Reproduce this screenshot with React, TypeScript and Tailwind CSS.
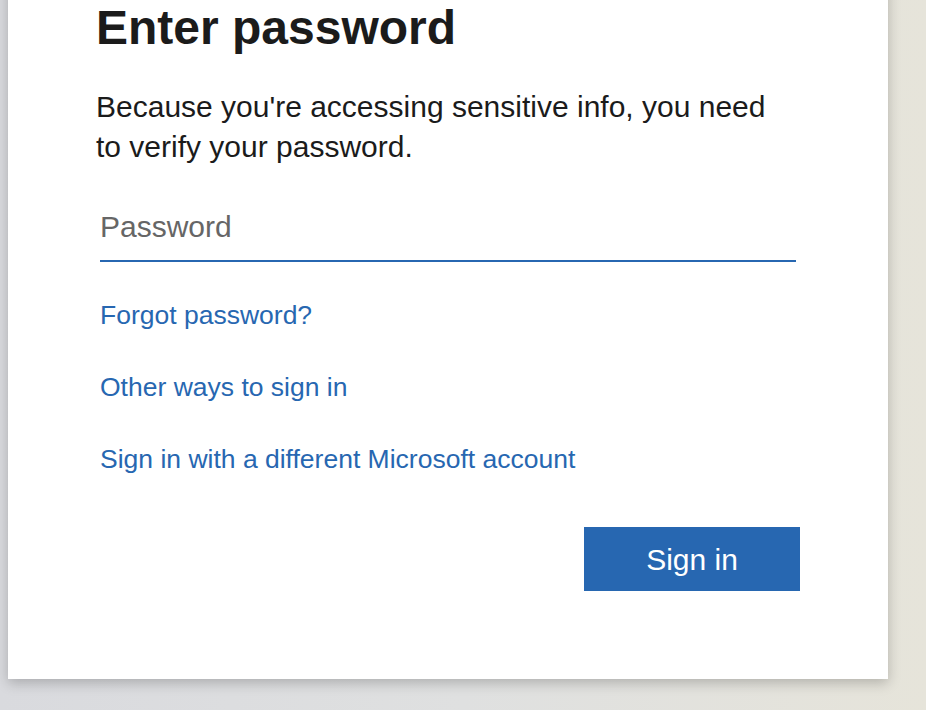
import { FC } from "react";

const font = { fontFamily: '"Liberation Sans", Arial, sans-serif' };

const links = [
  "Forgot password?",
  "Other ways to sign in",
  "Sign in with a different Microsoft account",
];

/**
 * Password prompt card, cropped at the top as in the capture.
 */
const App: FC = () => {
  return (
    <div
      style={font}
      className="h-[710px] w-[926px] overflow-hidden bg-[linear-gradient(90deg,#d9dade_0%,#dfe0e0_50%,#e6e4da_100%)]"
    >
      <div className="ml-[8px] mt-[-40px] w-[880px] bg-white pt-[40px] pb-[88px] shadow-[0_4px_12px_rgba(0,0,0,0.22)]">
        <div className="mx-[88px] flex flex-col">
          <h1 className="text-[48px] font-bold leading-[56px] text-[#1b1b1b]">
            Enter password
          </h1>

          <p className="mt-[31px] max-w-[690px] text-[30px] leading-[40px] text-[#1b1b1b]">
            Because you're accessing sensitive info, you need to verify your
            password.
          </p>

          <input
            type="password"
            placeholder="Password"
            className="mx-[4px] mt-[22px] h-[73px] border-b-2 border-[#2767b1] bg-transparent pt-[4px] text-[30px] text-[#1b1b1b] outline-none placeholder:text-[#666666]"
          />

          <div className="mt-[35px] flex flex-col gap-[36px] px-[4px]">
            {links.map((label) => (
              <a
                key={label}
                href="#"
                className="w-fit text-[26.5px] leading-[36px] text-[#2767b1]"
              >
                {label}
              </a>
            ))}
          </div>

          <div className="mt-[50px] flex justify-end">
            <button className="h-[64px] w-[216px] bg-[#2767b1] text-[30px] text-white">
              Sign in
            </button>
          </div>
        </div>
      </div>
    </div>
  );
};

export default App;
